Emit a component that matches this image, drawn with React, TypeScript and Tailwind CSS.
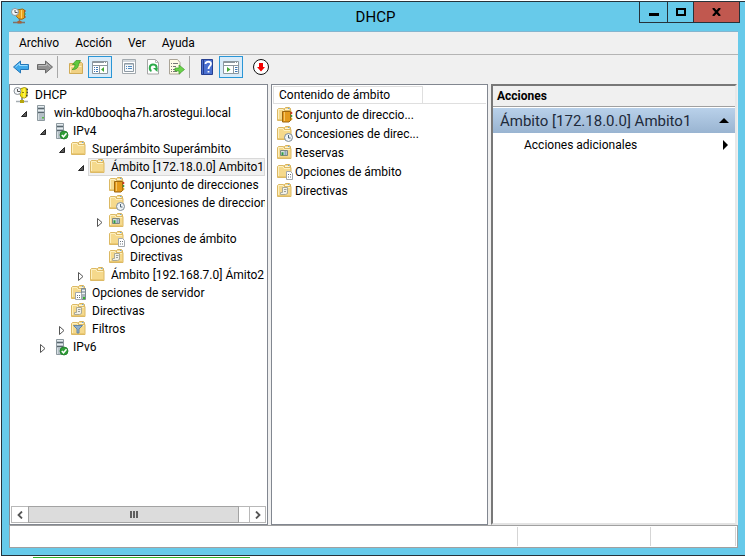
import type { ReactNode } from "react";

type IconName =
  | "dhcp" | "server" | "serverOk" | "folder" | "pool" | "lease"
  | "reserve" | "options" | "policy" | "serverOptions" | "filter";

function Folder() {
  return (
    <g>
      <path d="M7.500 3.500v-2l1-1h4l1 1v2z" fill="#f6dc94" stroke="#d8b25a" />
      <path d="M8 2.500h4" stroke="#fff6d8" />
      <path d="M11 1.500h1.500" stroke="#6aa5dc" />
      <path d="M.5 13.500v-11l1-1h5l1 2h6.500v10z" fill="#f5d98c" stroke="#dcb964" />
      <path d="M1.500 12.500v-10h4.500l1 2h6" fill="none" stroke="#fdf0c0" />
      <path d="M1 12.500h12.500" stroke="#eac873" />
    </g>
  );
}

function Tower() {
  return (
    <g>
      <path d="M4.500.500h7v15h-7z" fill="#b4bfc6" stroke="#8d999f" />
      <path d="M5 1.500h6M5 5.500h6" stroke="#e6ecef" />
      <path d="M5 3.500h6M5 7.500h6" stroke="#59666d" />
      <path d="M5.500 9v6" stroke="#d6dee2" />
      <path d="M9 12h2v1.500H9z" fill="#58b947" />
    </g>
  );
}

function Icon({ name }: { name: IconName }) {
  return (
    <svg viewBox="0 0 16 16" className="h-4 w-4 shrink-0 overflow-visible" aria-hidden="true">
      {name === "dhcp" && (
        <g>
          <path d="M5.500 2l5-1.500 2.500 1v8l-2.500 1.500-3-.5-1.500-3z" fill="#f5e60b" stroke="#a09210" />
          <path d="M10 1.500v9" stroke="#fffa9a" />
          <path d="M12.500 2.500h1.500M12.500 5.500h1.500M12 8.500h1.500" stroke="#444" strokeWidth="1.300" />
          <path d="M8 5.500h2" stroke="#8c7d10" />
          <circle cx="3.500" cy="4" r="3.500" fill="#f4f6f8" stroke="#8b9299" />
          <path d="M3.500 2v2.500H6" fill="none" stroke="#555" />
          <path d="M8 11v2.500" stroke="#6c767c" strokeWidth="1.500" />
          <path d="M2 14.500h12" stroke="#a5adb2" strokeWidth="1.500" />
          <path d="M6 13h4v3H6z" fill="#b5a50e" />
        </g>
      )}
      {name === "server" && <Tower />}
      {name === "serverOk" && (
        <g>
          <Tower />
          <circle cx="12" cy="12" r="4" fill="#2f9e36" stroke="#1c7a26" strokeWidth=".8" />
          <path d="M9.800 12l1.700 1.800 3-3.500" fill="none" stroke="#fff" strokeWidth="1.500" />
        </g>
      )}
      {!["dhcp", "server", "serverOk"].includes(name) && <Folder />}
      {name === "pool" && (
        <g>
          <path d="M5.500 4.500h8v9l-1.500 1.500h-6.500z" fill="#e39a1c" stroke="#9d6710" />
          <path d="M7.500 5v9" stroke="#f7c765" />
          <path d="M14.500 5v2" stroke="#d0352b" strokeWidth="1.500" />
          <path d="M14.500 8v2" stroke="#3d9b45" strokeWidth="1.500" />
          <path d="M14.500 11v2" stroke="#d9a520" strokeWidth="1.500" />
        </g>
      )}
      {name === "lease" && (
        <g>
          <circle cx="11.500" cy="11.500" r="4" fill="#eef3f7" stroke="#7f8c96" />
          <path d="M11.500 9v3h2" fill="none" stroke="#4c6478" />
        </g>
      )}
      {name === "reserve" && (
        <g>
          <path d="M3.500 5.500h7v5h-7z" fill="#d9e0dc" stroke="#7f8780" />
          <path d="M4.500 8h2M4.500 9.500h2" stroke="#2f9c42" strokeWidth="1.500" />
          <path d="M7.500 7h2M7.500 9h2" stroke="#49709a" />
        </g>
      )}
      {name === "options" && (
        <g>
          <path d="M9.500 7.500h4l2 2v6h-6z" fill="#fff" stroke="#a1a7ad" />
          <path d="M11 10.500h1M13 10.500h1M11 13h1M13 13h1" stroke="#68727c" />
        </g>
      )}
      {name === "policy" && (
        <g>
          <path d="M5.500 4.500h5v6l-2 1h-5v-2h2z" fill="#f1f0e8" stroke="#aaa995" />
          <path d="M7 6.500h2.500M7 8.500h2" stroke="#9c9f98" />
        </g>
      )}
      {name === "serverOptions" && (
        <g>
          <path d="M10.500 3.500h4v11h-4z" fill="#aab5bb" stroke="#7e8a90" />
          <path d="M11 5.500h3M11 8.500h3" stroke="#eef3f5" />
          <path d="M12 13h2" stroke="#35b62d" strokeWidth="2" />
          <path d="M4.500 7.500h5l1 1v6h-6z" fill="#fff" stroke="#a1a7ad" />
          <path d="M6 10.500h1M8 10.500h1M6 12.500h1M8 12.500h1" stroke="#68727c" />
        </g>
      )}
      {name === "filter" && (
        <path d="M2.500 4.500h9l-3.500 3.500v4h-2v-4z" fill="#8fb0cf" stroke="#6787a3" />
      )}
    </svg>
  );
}

type Node = { label: string; icon: IconName; level: number; open?: boolean; selected?: boolean };

const tree: Node[] = [
  { label: "DHCP", icon: "dhcp", level: 0 },
  { label: "win-kd0booqha7h.arostegui.local", icon: "server", level: 1, open: true },
  { label: "IPv4", icon: "serverOk", level: 2, open: true },
  { label: "Superámbito Superámbito", icon: "folder", level: 3, open: true },
  { label: "Ámbito [172.18.0.0] Ambito1", icon: "folder", level: 4, open: true, selected: true },
  { label: "Conjunto de direcciones", icon: "pool", level: 5 },
  { label: "Concesiones de direccion", icon: "lease", level: 5 },
  { label: "Reservas", icon: "reserve", level: 5, open: false },
  { label: "Opciones de ámbito", icon: "options", level: 5 },
  { label: "Directivas", icon: "policy", level: 5 },
  { label: "Ámbito [192.168.7.0] Ámito2", icon: "folder", level: 4, open: false },
  { label: "Opciones de servidor", icon: "serverOptions", level: 3 },
  { label: "Directivas", icon: "policy", level: 3 },
  { label: "Filtros", icon: "filter", level: 3, open: false },
  { label: "IPv6", icon: "serverOk", level: 2, open: false },
];

const indents = ["pl-0.5", "pl-0.5", "pl-[21px]", "pl-[40px]", "pl-[59px]", "pl-[78px]"];

function TreeRow({ node }: { node: Node }) {
  return (
    <li role="treeitem" aria-level={node.level + 1} aria-selected={!!node.selected} className={`flex h-[18px] items-center ${indents[node.level]}`}>
      {node.level > 0 && (
        node.open === undefined ? <span className="w-[19px] shrink-0" /> : (
          <button aria-label={node.open ? "Contraer" : "Expandir"} className="flex w-[19px] shrink-0 justify-center pt-0.5">
            <svg viewBox="0 0 8 9" className="h-[9px] w-2" aria-hidden="true">
              {node.open
                ? <path d="M6.500 1.500v5h-5z" fill="#595959" stroke="#262626" />
                : <path d="M1.500.5l4.500 4-4.500 4z" fill="#fff" stroke="#555" />}
            </svg>
          </button>
        )
      )}
      <div className={`flex h-[18px] min-w-0 items-center gap-[5px] ${node.selected ? "-ml-0.5 flex-1 border border-[#d9d9d9] bg-[#f0f0f0] pl-px" : ""}`}>
        <Icon name={node.icon} />
        <span className="whitespace-nowrap">{node.label}</span>
      </div>
    </li>
  );
}

const items: { label: string; icon: IconName }[] = [
  { label: "Conjunto de direccio...", icon: "pool" },
  { label: "Concesiones de direc...", icon: "lease" },
  { label: "Reservas", icon: "reserve" },
  { label: "Opciones de ámbito", icon: "options" },
  { label: "Directivas", icon: "policy" },
];

function Tool({ label, active, children }: { label: string; active?: boolean; children: ReactNode }) {
  return (
    <button aria-label={label} className={`flex h-[22px] w-6 shrink-0 items-center justify-center ${active ? "border border-[#2a96d6] bg-[#d9ebf9]" : ""}`}>
      <svg viewBox="0 0 16 16" className="h-4 w-4 shrink-0 overflow-visible" aria-hidden="true">{children}</svg>
    </button>
  );
}

function Divider() {
  return <span className="h-[22px] w-px shrink-0 bg-[#a8a8a8]" />;
}

function Toolbar() {
  return (
    <div role="toolbar" aria-label="Herramientas" className="flex h-[29px] items-start pt-px">
      <Tool label="Atrás">
        <path d="M.5 8l7-6v3.500h8v5h-8v3.500z" fill="#3fa9ea" stroke="#2476b8" />
        <path d="M2.500 8l4-3.500v2h8" fill="none" stroke="#9adcff" />
      </Tool>
      <Tool label="Adelante">
        <path d="M15.500 8l-7-6v3.500h-8v5h8v3.500z" fill="#929292" stroke="#696969" />
        <path d="M1.500 6.500h8v-2l4 3.500" fill="none" stroke="#bdbdbd" />
      </Tool>
      <Divider />
      <span className="w-1.5" />
      <Tool label="Subir un nivel">
        <path d="M1.500 14.500v-10h5l1.500-1h5.500l1 1v10z" fill="#f0d184" stroke="#d0ab56" />
        <path d="M2.500 13.500v-6h11" fill="none" stroke="#fff0bc" />
        <path d="M4 10.500c2-1 3-2.500 3-5H4.500L8 1.500h4.500l-2 4c0 3-2.500 5.500-6.500 5z" fill="#5ec93d" stroke="#37931f" strokeWidth=".7" />
      </Tool>
      <Tool label="Mostrar u ocultar el árbol de consola" active>
        <path d="M.5 2.500h15v12H.5z" fill="#fff" stroke="#8c979f" />
        <path d="M0 3.500h16M0 6.500h16" stroke="#8c979f" />
        <path d="M12 3.500h1M14 3.500h1" stroke="#fff" />
        <path d="M7.500 7v7" stroke="#8c979f" />
        <path d="M2 8.500h1M4 8.500h2M2 10.500h1M4 10.500h2M2 12.500h1M4 12.500h2" stroke="#3e77b5" />
        <path d="M12 8v5L9 10.500z" fill="#45a933" />
      </Tool>
      <span className="w-[5px]" />
      <Tool label="Propiedades">
        <path d="M1.500.5h13v14h-13z" fill="#fff" stroke="#a2a9ae" />
        <path d="M2 2h12" stroke="#a7b2bb" />
        <path d="M3.500 4.500h9v8h-9z" fill="#f5f8fb" stroke="#8e9aa4" />
        <path d="M4 5h8" stroke="#8e9aa4" />
        <path d="M5 7.500h1M7 7.500h4M5 9.500h1M7 9.500h4" stroke="#4f89be" />
      </Tool>
      <Tool label="Actualizar">
        <path d="M2.500.5h8l3 3v11.500h-11z" fill="#fff" stroke="#a6a6a6" />
        <path d="M10.500.5v3h3" fill="none" stroke="#bababa" />
        <path d="M6.500 12c-2.500-1-2.500-6.500 1.500-6.500s4.500 4 2.500 5.500" fill="none" stroke="#2caa4a" strokeWidth="2" />
        <path d="M8 9h4.500v4z" fill="#2caa4a" />
      </Tool>
      <Tool label="Exportar lista">
        <path d="M.5.5h8l2.500 3v11.500H.5z" fill="#fffbe7" stroke="#aaa497" />
        <path d="M2 4.500h1M4 4.500h5M2 7.500h1M4 7.500h3M2 10.500h1M4 10.500h2M2 12.500h1M4 12.500h4" stroke="#777" />
        <path d="M6 9h4V6l5.500 4.500-5.500 4.500v-3H6z" fill="#6bd34b" stroke="#3d9e29" strokeWidth=".7" />
      </Tool>
      <Divider />
      <span className="w-[5px]" />
      <Tool label="Ayuda">
        <path d="M2.500.5h11v15h-11z" fill="#4a70d0" stroke="#263f91" />
        <path d="M4.500 1v14" stroke="#233c8b" />
        <path d="M6.500 5c0-3 5.500-3 5.500 0 0 2-2.500 2-2.500 5M9.500 12v1.500" fill="none" stroke="#fff" strokeWidth="1.800" />
      </Tool>
      <Tool label="Mostrar u ocultar el panel de acciones" active>
        <path d="M.5 2.500h15v12H.5z" fill="#fff" stroke="#8c979f" />
        <path d="M0 3.500h16M0 6.500h16" stroke="#8c979f" />
        <path d="M12 3.500h1M14 3.500h1" stroke="#fff" />
        <path d="M10.500 7v7" stroke="#8c979f" />
        <path d="M12 8.500h2.500M12 10.500h2.500M12 12.500h2.500" stroke="#3e77b5" />
        <path d="M4 8v5l3.500-2.500z" fill="#45a933" />
      </Tool>
      <span className="w-1.5" />
      <Tool label="Desactivar">
        <circle cx="8" cy="8" r="7.500" fill="#fff" stroke="#111" />
        <path d="M6 4h4v4h2L8 12.500 4 8h2z" fill="#f40000" />
      </Tool>
    </div>
  );
}

function ScrollBar() {
  return (
    <div className="mx-px mb-px flex h-[17px] shrink-0 border border-[#b8b8b8] text-[#555]">
      <button aria-label="Desplazar a la izquierda" className="flex w-4 items-center justify-center">
        <svg viewBox="0 0 6 8" className="h-2 w-1.5" aria-hidden="true"><path d="M5 .5L1.500 4 5 7.500" fill="none" stroke="currentColor" strokeWidth="1.800" /></svg>
      </button>
      <div className="-my-px flex flex-1 items-center justify-center gap-px border border-[#a3a3a3] bg-[#dcdcdc]">
        <span className="h-[7px] w-0.5 bg-[#606060]" />
        <span className="h-[7px] w-0.5 bg-[#606060]" />
        <span className="h-[7px] w-0.5 bg-[#606060]" />
      </div>
      <button aria-label="Desplazar a la derecha" className="ml-2.5 flex w-4 items-center justify-center border-l border-[#b8b8b8]">
        <svg viewBox="0 0 6 8" className="h-2 w-1.5" aria-hidden="true"><path d="M1 .5L4.500 4 1 7.500" fill="none" stroke="currentColor" strokeWidth="1.800" /></svg>
      </button>
    </div>
  );
}

export default function App() {
  return (
    <div className="flex h-screen flex-col bg-white pl-px pt-px font-['Roboto','Open_Sans',sans-serif] text-[12px] leading-4 text-black">
      <main className="flex min-h-0 flex-1 flex-col border-y border-l border-[#26323a] bg-[#67caea] pb-[7px] pl-[7px] pr-[7px]">
        <header className="flex h-[29px] shrink-0 items-start">
          <div className="flex flex-1 pl-0.5 pt-1.5">
            <svg viewBox="0 0 16 16" className="h-4 w-4" aria-label="DHCP">
              <path d="M5.500 2l6-1 2 1v8l-3 1.500-3-1-2-2z" fill="#e9a21f" stroke="#9b6a18" />
              <path d="M10.500 2v8" stroke="#ffd36b" />
              <path d="M14 2v2M14 8v2" stroke="#b84824" />
              <path d="M14 5v2" stroke="#4f9f45" />
              <circle cx="4" cy="4" r="3.500" fill="#f4f6f8" stroke="#8b9299" />
              <path d="M4 2v2.500h2.500" fill="none" stroke="#555" />
              <path d="M8.500 11v3M2 14.500h12" stroke="#7f7168" strokeWidth="1.500" />
              <path d="M6.500 13h4v2.500h-4z" fill="#a76136" />
            </svg>
          </div>
          <h1 className="pt-[5px] text-[15px] leading-5">DHCP</h1>
          <div className="-mr-0.5 flex flex-1 justify-end">
            <div className="flex h-[21px] border-x border-b border-[#26323a]">
              <button aria-label="Minimizar" className="flex w-[27px] items-center justify-center pt-1"><span className="h-[3px] w-2.5 bg-black" /></button>
              <button aria-label="Maximizar" className="flex w-[26px] items-center justify-center border-l border-[#26323a]"><span className="h-2 w-2.5 border-2 border-black" /></button>
              <button aria-label="Cerrar" className="flex w-[46px] items-center justify-center border-l border-[#26323a] bg-[#c1584f]">
                <svg viewBox="0 0 9 8" className="h-2 w-[9px]" aria-hidden="true"><path d="M1 0l7 8M8 0L1 8" stroke="#000" strokeWidth="2.200" /></svg>
              </button>
            </div>
          </div>
        </header>

        <div className="flex min-h-0 flex-1 flex-col bg-[#f0f0f0]">
          <nav aria-label="Menú" className="flex h-[24px] shrink-0 items-center gap-4 border-b border-t border-b-[#b4b4b4] border-t-[#84b5cf] pl-2.5">
            <button>Archivo</button>
            <button>Acción</button>
            <button>Ver</button>
            <button>Ayuda</button>
          </nav>
          <Toolbar />

          <div className="flex min-h-0 flex-1 gap-[3px]">
            <section aria-label="Consola" className="flex w-[259px] shrink-0 flex-col border border-[#828790] bg-white">
              <ul role="tree" className="mx-0.5 mt-px min-h-0 flex-1 overflow-hidden">
                {tree.map((node, i) => <TreeRow key={i} node={node} />)}
              </ul>
              <ScrollBar />
            </section>

            <section className="w-[217px] shrink-0 border border-[#828790] bg-white px-px pt-px">
              <h2 className="mb-px flex h-[18px] border-b border-l border-[#dfdfdf]">
                <span className="w-[149px] border-r border-t border-[#dfdfdf] pl-[5px]">Contenido de ámbito</span>
              </h2>
              <ul>
                {items.map((item) => (
                  <li key={item.label} className="flex h-[19px] items-center gap-0.5 pl-1">
                    <Icon name={item.icon} />
                    <span className="whitespace-nowrap">{item.label}</span>
                  </li>
                ))}
              </ul>
            </section>

            <section className="mr-px min-w-0 flex-1 border-2 border-b-[#e3e3e3] border-l-[#787878] border-r-[#e8e8e8] border-t-[#787878] bg-white">
              <h2 className="flex h-[21px] items-center border-b border-[#a0a0a0] bg-[#f0f0f0] pl-1 font-bold">Acciones</h2>
              <button className="mt-px flex h-[25px] w-full items-center justify-between bg-gradient-to-b from-[#b9d1ea] to-[#99b4d1] pl-[7px] pr-1.5 text-[15px] text-[#1e2a3a]">
                Ámbito [172.18.0.0] Ambito1
                <svg viewBox="0 0 10 5" className="h-[5px] w-2.5" aria-hidden="true"><path d="M0 5l5-5 5 5z" fill="#000" /></svg>
              </button>
              <button className="flex h-[23px] w-full items-center justify-between pl-[31px] pr-[7px]">
                Acciones adicionales
                <svg viewBox="0 0 5 10" className="h-2.5 w-[5px]" aria-hidden="true"><path d="M0 0l5 5-5 5z" fill="#000" /></svg>
              </button>
            </section>
          </div>

          <footer className="flex h-[23px] shrink-0 border border-[#a0a0a0] bg-white py-px pr-px">
            <span className="flex-1 border-r border-[#d5d5d5]" />
            <span className="w-[133px] border-r border-[#d5d5d5]" />
            <span className="w-[85px] border-r border-[#d5d5d5]" />
          </footer>
        </div>
      </main>
      <div className="h-0.5 shrink-0 pl-8 pt-px"><div className="h-px w-[217px] bg-[#2db52d]" /></div>
    </div>
  );
}
